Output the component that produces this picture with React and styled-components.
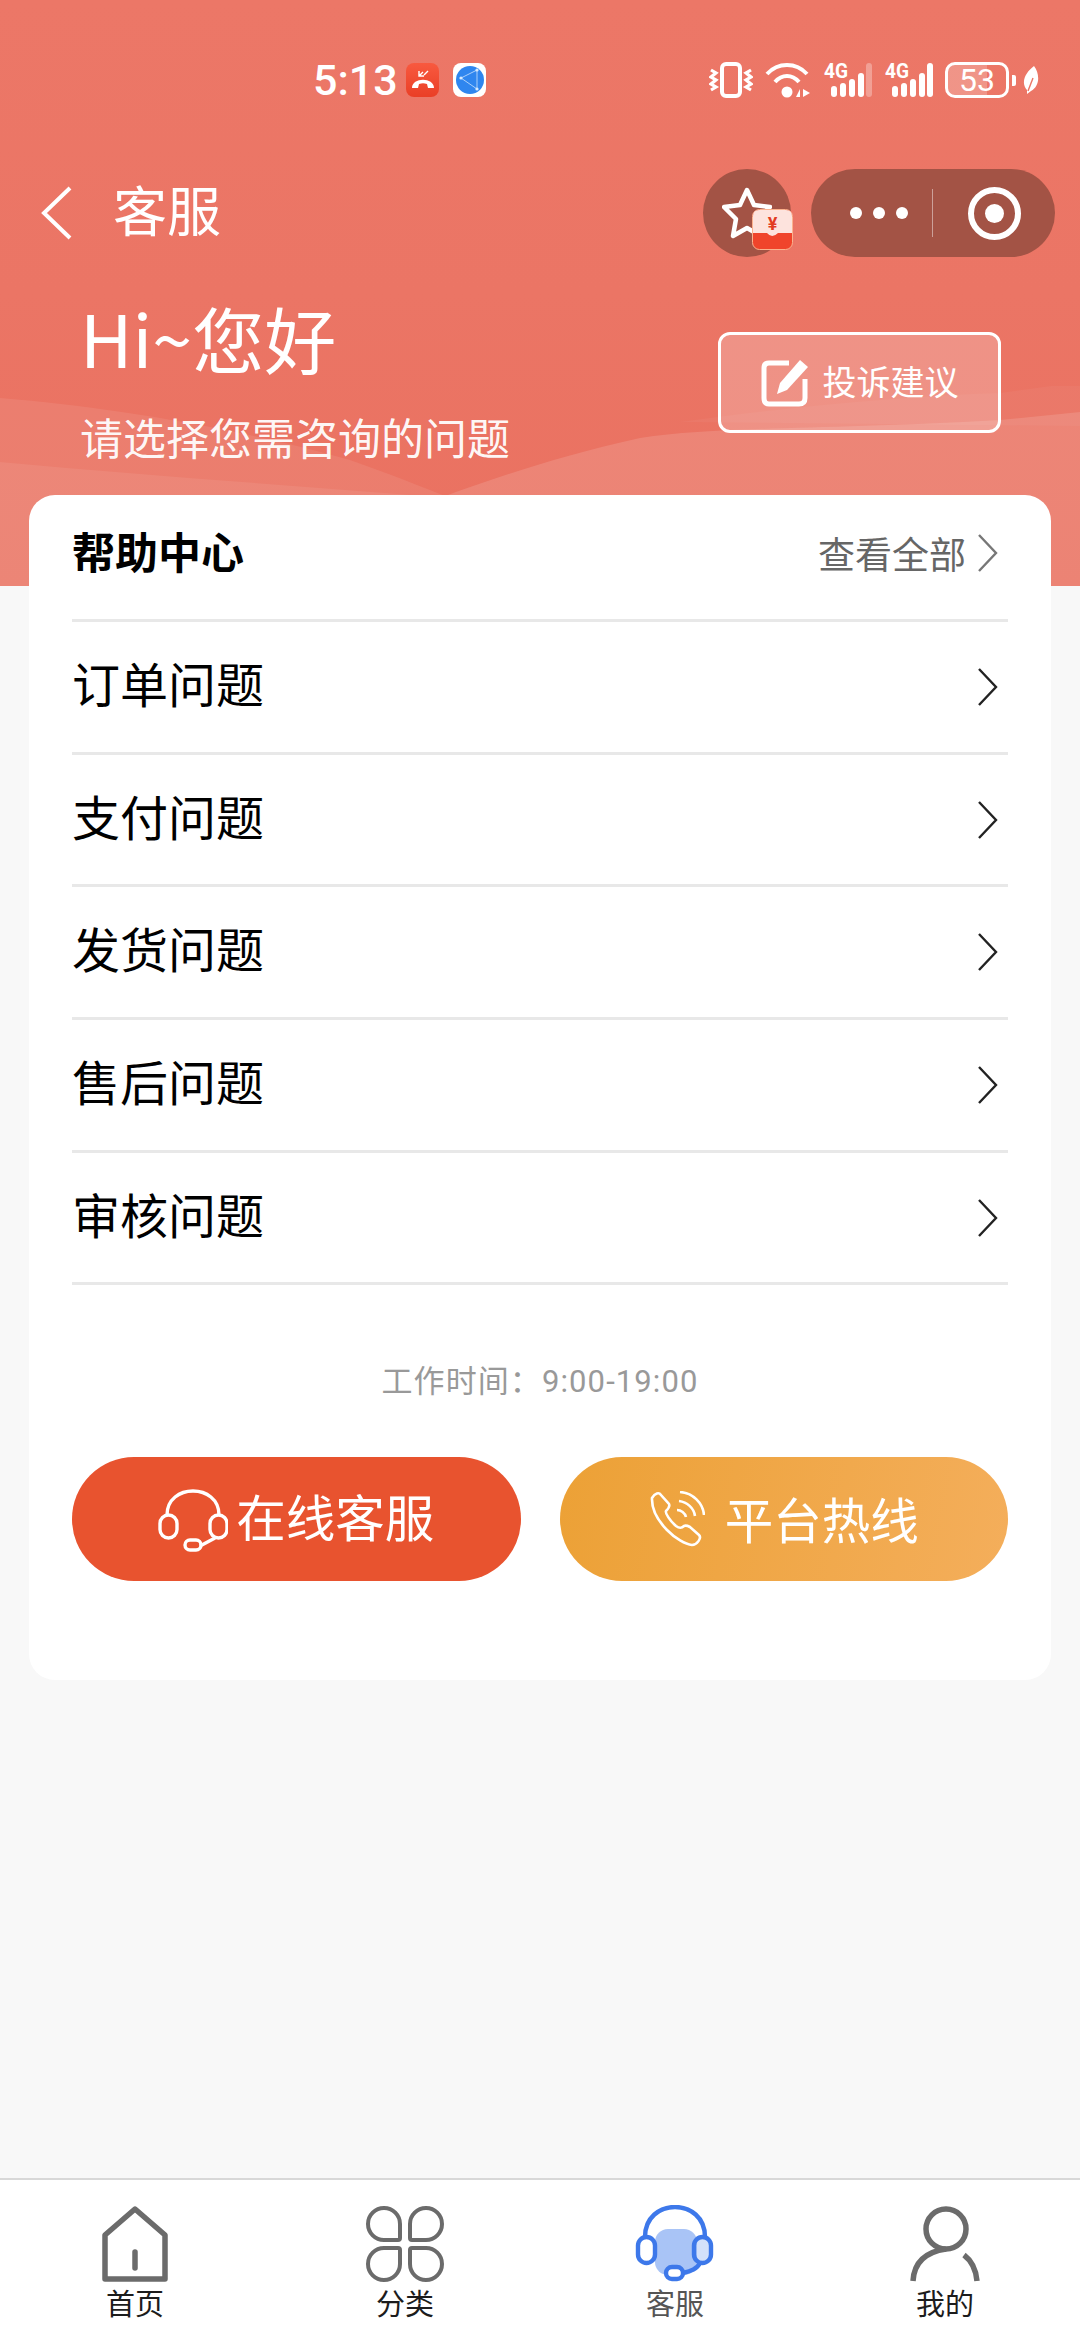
import styled, { createGlobalStyle } from "styled-components";

const GlobalStyle = createGlobalStyle`
  * {
    box-sizing: border-box;
  }
  body {
    margin: 0;
    background: #f8f8f8;
    font-family: "Noto Sans CJK SC", "Noto Sans", sans-serif;
  }
`;

const Page = styled.div`
  width: 1080px;
  min-height: 2340px;
  display: flex;
  flex-direction: column;
  background: #f8f8f8;
`;

const Header = styled.header`
  position: relative;
  height: 586px;
  color: #fff;
  background: linear-gradient(180deg, #ec7767 0%, #eb7565 50%, #ea7160 100%);
  overflow: hidden;
`;

const Waves = styled.svg`
  position: absolute;
  left: 0;
  bottom: 0;
  width: 1080px;
  height: 200px;
`;

const HeaderInner = styled.div`
  position: relative;
`;

const StatusBar = styled.div`
  height: 40px;
  margin-top: 60px;
  padding-left: 313px;
  padding-right: 40px;
  display: flex;
  align-items: center;
`;

const Clock = styled.span`
  font-family: "Roboto", sans-serif;
  font-size: 43px;
  font-weight: 500;
  line-height: 40px;
  width: 93px;
`;

const AppIcon = styled.span`
  width: 33px;
  height: 34px;
  border-radius: 8px;
  margin-right: 14px;
  display: flex;
  align-items: center;
  justify-content: center;
  background: ${({ $bg }) => $bg};
`;

const StatusIcons = styled.div`
  margin-left: auto;
  display: flex;
  align-items: center;
  gap: 12px;
`;

const BatteryWrap = styled.div`
  margin-right: -6px;
  display: flex;
  align-items: center;
  gap: 3px;
`;

const Battery = styled.span`
  width: 64px;
  height: 36px;
  border: 3px solid #fff;
  border-radius: 10px;
  font-family: "Roboto", sans-serif;
  font-size: 32px;
  line-height: 30px;
  text-align: center;
  background: linear-gradient(90deg, rgba(255, 255, 255, 0.22) 68%, transparent 68%);
`;

const BatteryTip = styled.span`
  width: 4px;
  height: 11px;
  background: #fff;
  border-radius: 0 2px 2px 0;
`;

const NavBar = styled.div`
  height: 88px;
  margin-top: 69px;
  padding: 0 25px 0 40px;
  display: flex;
  align-items: center;
`;

const BackArrow = styled.svg`
  width: 32px;
  height: 54px;
`;

const NavTitle = styled.h1`
  margin: 0 0 8px 41px;
  font-size: 54px;
  font-weight: 400;
  line-height: 70px;
`;

const NavActions = styled.div`
  margin-left: auto;
  display: flex;
  gap: 20px;
`;

const FavButton = styled.div`
  position: relative;
  width: 88px;
  height: 88px;
  border-radius: 50%;
  background: #a35345;
  display: flex;
  align-items: center;
  justify-content: center;
`;

const RedPacket = styled.svg`
  position: absolute;
  right: -2px;
  bottom: 7px;
  width: 41px;
  height: 41px;
`;

const Capsule = styled.div`
  width: 244px;
  height: 88px;
  border-radius: 44px;
  background: #a35345;
  display: flex;
  align-items: center;
  padding-left: 39px;
`;

const Dots = styled.div`
  display: flex;
  gap: 11px;
  width: 82px;
`;

const Dot = styled.span`
  width: 12px;
  height: 12px;
  border-radius: 50%;
  background: #fff;
`;

const CapsuleDivider = styled.span`
  width: 1px;
  height: 48px;
  background: rgba(255, 255, 255, 0.45);
`;

const RecordRing = styled.span`
  width: 53px;
  height: 53px;
  margin-left: 35px;
  border: 6px solid #fff;
  border-radius: 50%;
  display: flex;
  align-items: center;
  justify-content: center;
  &::after {
    content: "";
    width: 19px;
    height: 19px;
    border-radius: 50%;
    background: #fff;
  }
`;

const Greeting = styled.div`
  padding: 32px 79px 0 80px;
  display: flex;
  justify-content: space-between;
`;

const GreetingText = styled.div`
  display: flex;
  flex-direction: column;
`;

const Hello = styled.div`
  font-size: 72px;
  line-height: 96px;
`;

const HelloSub = styled.div`
  margin-top: 21px;
  font-size: 43px;
  line-height: 60px;
  color: rgba(255, 255, 255, 0.96);
`;

const Complaint = styled.div`
  width: 283px;
  height: 101px;
  margin-top: 43px;
  border: 3px solid #fff;
  border-radius: 12px;
  background: rgba(255, 255, 255, 0.22);
  display: flex;
  align-items: center;
  justify-content: center;
  gap: 14px;
  font-size: 34px;
`;

const ComplaintLabel = styled.span`
  margin-bottom: 4px;
`;

const Card = styled.section`
  position: relative;
  margin: -91px 29px 0;
  padding: 0 43px 99px;
  background: #fff;
  border-radius: 26px;
`;

const CardHead = styled.div`
  height: 127px;
  display: flex;
  align-items: center;
  justify-content: space-between;
  border-bottom: 3px solid #e8e8e8;
`;

const CardTitle = styled.h2`
  margin: 0 0 14px;
  font-size: 43px;
  font-weight: 700;
  color: #000;
`;

const ViewAll = styled.div`
  display: flex;
  align-items: center;
  gap: 10px;
  margin-bottom: 8px;
  padding-right: 10px;
  font-size: 37px;
  color: #666;
`;

const Chevron = styled.svg`
  width: 22px;
  height: 40px;
  color: ${({ $color }) => $color};
`;

const Row = styled.div`
  height: 132.7px;
  padding-right: 10px;
  display: flex;
  align-items: center;
  justify-content: space-between;
  border-bottom: 3px solid #e8e8e8;
  font-size: 48px;
  color: #000;
`;

const RowLabel = styled.span`
  margin-bottom: 10px;
`;

const WorkHours = styled.div`
  margin-top: 75px;
  font-family: "Roboto", "Noto Sans CJK SC", sans-serif;
  font-size: 31px;
  letter-spacing: 1.1px;
  line-height: 44px;
  text-align: center;
  color: #999;
`;

const Actions = styled.div`
  margin-top: 53px;
  display: flex;
  gap: 39px;
`;

const ActionButton = styled.div`
  flex: 1;
  height: 124px;
  border-radius: 62px;
  background: ${({ $bg }) => $bg};
  color: #fff;
  display: flex;
  align-items: center;
  justify-content: center;
  gap: ${({ $gap }) => $gap}px;
`;

const ActionLabel = styled.span`
  font-size: ${({ $size }) => $size}px;
  margin-bottom: ${({ $lift }) => $lift}px;
`;

const Main = styled.main`
  flex: 1;
`;

const TabBar = styled.nav`
  height: 162px;
  padding-top: 25px;
  display: grid;
  grid-template-columns: repeat(4, 1fr);
  background: #fff;
  border-top: 2px solid #d8d8d8;
`;

const Tab = styled.div`
  display: flex;
  flex-direction: column;
  align-items: center;
`;

const TabIcon = styled.svg`
  width: 80px;
  height: 78px;
  display: block;
`;

const TabLabel = styled.span`
  font-size: 29px;
  line-height: 38px;
  color: ${({ $active }) => ($active ? "#555" : "#1c1c1c")};
`;

const ChevronIcon = ({ color }) => (
  <Chevron $color={color} viewBox="0 0 22 40" fill="none">
    <path d="M3 2 L20 20 L3 38" stroke="currentColor" strokeWidth="2.4" />
  </Chevron>
);

// mobile signal indicator, the tallest bar is dimmed when weak
const SignalIcon = ({ weak }) => (
  <svg width="49" height="44" viewBox="0 -4 49 44">
    <text x="1" y="16" fontFamily="Roboto, sans-serif" fontSize="21" fontWeight="700" fill="#fff" textLength="24" lengthAdjust="spacingAndGlyphs">4G</text>
    <rect x="8" y="24" width="6" height="11" rx="3" fill="#fff" />
    <rect x="17" y="21" width="6" height="14" rx="3" fill="#fff" />
    <rect x="26" y="17" width="6" height="18" rx="3" fill="#fff" />
    <rect x="35" y="11" width="6" height="24" rx="3" fill="#fff" />
    <rect x="43" y="1" width="6" height="34" rx="3" fill="#fff" opacity={weak ? 0.3 : 1} />
  </svg>
);

const VibrateIcon = () => (
  <svg width="44" height="36" viewBox="0 0 44 36" fill="none" stroke="#fff" strokeWidth="4">
    <rect x="13" y="2" width="18" height="32" rx="4" />
    <path d="M2 8 l5 3 -5 4 5 3 -5 4 5 3 -5 3" strokeWidth="3.2" />
    <path d="M42 8 l-5 3 5 4 -5 3 5 4 -5 3 5 3" strokeWidth="3.2" />
  </svg>
);

const WifiIcon = () => (
  <svg width="46" height="36" viewBox="0 0 46 36" fill="none" stroke="#fff" strokeWidth="4">
    <path d="M2 12 C13 0 31 0 42 12" />
    <path d="M10 20 C17 12 27 12 34 20" />
    <circle cx="22" cy="30" r="5.5" fill="#fff" stroke="none" />
    <path d="M35 35 V27 L31 35 Z M38 35 V27 L45 31 Z" fill="#fff" stroke="none" />
  </svg>
);

const LeafIcon = () => (
  <svg width="18" height="28" viewBox="0 0 18 28">
    <path d="M12 0 C18 8 18 20 9 25 L5 28 L5 24 C-2 16 4 6 12 0 Z" fill="#fff" />
    <path d="M6 25 L11 12" stroke="#eb7565" strokeWidth="1.4" />
  </svg>
);

const HeadsetIcon = ({ color, width, height }) => (
  <svg width={width} height={height} viewBox="0 0 70 66" fill="none" stroke={color} strokeWidth="3.4">
    <path d="M9 29 C9 -3 61 -3 61 29" />
    <rect x="2" y="29" width="17" height="23" rx="8.5" />
    <rect x="52" y="29" width="17" height="23" rx="8.5" />
    <path d="M57 52 L42 60" />
    <rect x="27" y="54" width="16" height="10" rx="5" />
  </svg>
);

const App = () => {
  const rows = ["订单问题", "支付问题", "发货问题", "售后问题", "审核问题"];

  return (
    <Page>
      <GlobalStyle />
      <Header>
        <Waves viewBox="0 0 1080 200" preserveAspectRatio="none">
          <path d="M0 12 C100 20 230 40 350 74 C390 88 420 100 450 112 L450 200 L0 200 Z" fill="#fff" opacity="0.08" />
          <path d="M0 76 C150 90 300 100 450 112 L450 200 L0 200 Z" fill="#fff" opacity="0.07" />
          <path d="M440 112 C500 90 560 70 640 52 C720 40 820 44 1000 34 L1080 26 L1080 200 L440 200 Z" fill="#fff" opacity="0.13" />
          <path d="M680 36 C780 22 900 10 1000 7 L1080 -4 L1080 40 Z" fill="#fff" opacity="0.04" />
        </Waves>
        <HeaderInner>
          <StatusBar>
            <Clock>5:13</Clock>
            <AppIcon $bg="linear-gradient(180deg, #f8593f, #ea3f26)">
              <svg width="24" height="22" viewBox="0 0 24 22" fill="none">
                <path d="M1 19 C1 8 23 8 23 19 L17 19 L16 15 C13 14 11 14 8 15 L7 19 Z" fill="#fff" />
                <path d="M8 2 V7 H13 M8 7 L12 3 M13 6 L17 2" stroke="#fff" strokeWidth="1.4" />
              </svg>
            </AppIcon>
            <AppIcon $bg="#fff">
              <svg width="28" height="28" viewBox="0 0 28 28">
                <circle cx="14" cy="14" r="14" fill="#2f86ef" />
                <path d="M21 4 L5 12 L21 23 Z" fill="none" stroke="#b9d8fa" strokeWidth="0.9" />
                <circle cx="21" cy="4" r="1.6" fill="#d6e9fd" />
                <circle cx="5" cy="12" r="1.6" fill="#d6e9fd" />
                <circle cx="21" cy="23" r="1.6" fill="#d6e9fd" />
              </svg>
            </AppIcon>
            <StatusIcons>
              <VibrateIcon />
              <WifiIcon />
              <SignalIcon weak />
              <SignalIcon />
              <BatteryWrap>
                <Battery>53</Battery>
                <BatteryTip />
              </BatteryWrap>
              <LeafIcon />
            </StatusIcons>
          </StatusBar>
          <NavBar>
            <BackArrow viewBox="0 0 32 54" fill="none">
              <path d="M30 2 L4 27 L30 52" stroke="#fff" strokeWidth="4" />
            </BackArrow>
            <NavTitle>客服</NavTitle>
            <NavActions>
              <FavButton>
                <svg width="50" height="52" viewBox="0 0 50 52" fill="none">
                  <path d="M25 3 L32 18 L48 20 L36 32 L39 49 L25 41 L11 49 L14 32 L2 20 L18 18 Z" stroke="#fff" strokeWidth="4.5" strokeLinejoin="round" />
                </svg>
                <RedPacket viewBox="0 0 41 41">
                  <rect x="0.5" y="0.5" width="40" height="40" rx="7" fill="#f0442b" stroke="#fbb28e" />
                  <path d="M1 7 Q1 1 7 1 H34 Q40 1 40 7 V24 H26 Q20 30 15 24 H1 Z" fill="#fde3dd" />
                  <text x="20.5" y="21" textAnchor="middle" fontSize="18" fontWeight="700" fontFamily="Roboto, sans-serif" fill="#e23b22">¥</text>
                </RedPacket>
              </FavButton>
              <Capsule>
                <Dots>
                  <Dot />
                  <Dot />
                  <Dot />
                </Dots>
                <CapsuleDivider />
                <RecordRing />
              </Capsule>
            </NavActions>
          </NavBar>
          <Greeting>
            <GreetingText>
              <Hello>Hi~您好</Hello>
              <HelloSub>请选择您需咨询的问题</HelloSub>
            </GreetingText>
            <Complaint>
              <svg width="48" height="48" viewBox="0 0 48 48" fill="none">
                <path d="M28 4 H8 Q3 4 3 9 V39 Q3 45 8 45 H38 Q44 45 44 39 V20" stroke="#fff" strokeWidth="5" />
                <path d="M39 1 L47 8 L26 31 L16 35 L19 24 Z" fill="#fff" />
              </svg>
              <ComplaintLabel>投诉建议</ComplaintLabel>
            </Complaint>
          </Greeting>
        </HeaderInner>
      </Header>

      <Main>
        <Card>
          <CardHead>
            <CardTitle>帮助中心</CardTitle>
            <ViewAll>
              查看全部
              <ChevronIcon color="#777" />
            </ViewAll>
          </CardHead>
          {rows.map((label) => (
            <Row key={label}>
              <RowLabel>{label}</RowLabel>
              <ChevronIcon color="#222" />
            </Row>
          ))}
          <WorkHours>工作时间：9:00-19:00</WorkHours>
          <Actions>
            <ActionButton $bg="#e8532f" $gap={8}>
              <HeadsetIcon color="#fff" width={70} height={66} />
              <ActionLabel $size={49.5} $lift={8}>在线客服</ActionLabel>
            </ActionButton>
            <ActionButton $bg="linear-gradient(100deg, #eca136, #f4ae5b)" $gap={20}>
              <svg width="56" height="56" viewBox="0 0 56 56" fill="none" stroke="#fff" strokeWidth="2.6">
                <path d="M3 7 C6 2 10 1 12 4 L20 13 C21 15 19 18 17 20 C16 22 21 30 27 35 C31 38 33 37 35 35 C37 34 39 35 41 36 L50 44 C53 47 48 54 43 54 C30 53 2 30 3 7 Z" />
                <path d="M31 1 C44 2 54 12 55 24" />
                <path d="M30 10 C38 11 45 17 46 25" />
                <path d="M28 19 C32 19 36 22 37 26" />
              </svg>
              <ActionLabel $size={48.5} $lift={2}>平台热线</ActionLabel>
            </ActionButton>
          </Actions>
        </Card>
      </Main>

      <TabBar>
        <Tab>
          <TabIcon viewBox="0 0 80 78" fill="none" stroke="#6b6b6b" strokeWidth="5.5" strokeLinejoin="round">
            <path d="M40 4 L70 30 V74 H10 V30 Z" />
            <path d="M40 47 V63" strokeLinecap="round" />
          </TabIcon>
          <TabLabel>首页</TabLabel>
        </Tab>
        <Tab>
          <TabIcon viewBox="0 0 80 78" fill="none" stroke="#6b6b6b" strokeWidth="4">
            <path d="M33 35 H19 A16 16 0 1 1 35 19 V33 Q35 35 33 35 Z" />
            <path d="M47 35 Q45 35 45 33 V19 A16 16 0 1 1 61 35 Z" />
            <path d="M35 45 V59 A16 16 0 1 1 19 43 H33 Q35 43 35 45 Z" />
            <path d="M45 45 Q45 43 47 43 H61 A16 16 0 1 1 45 59 Z" />
          </TabIcon>
          <TabLabel>分类</TabLabel>
        </Tab>
        <Tab>
          <TabIcon viewBox="0 0 80 78" fill="none" stroke="#3d78ea" strokeWidth="4.4">
            <rect x="20" y="24" width="42" height="46" rx="13" fill="#a9c4f6" stroke="none" />
            <path d="M10 32 C10 -8 70 -8 70 32" />
            <rect x="3" y="32" width="17" height="26" rx="8.5" fill="#fff" />
            <rect x="59" y="32" width="17" height="26" rx="8.5" fill="#a9c4f6" fillOpacity="0.5" />
            <path d="M65 58 C62 64 56 66 48 68" />
            <rect x="31" y="62" width="17" height="12" rx="6" fill="#fff" />
          </TabIcon>
          <TabLabel $active>客服</TabLabel>
        </Tab>
        <Tab>
          <TabIcon viewBox="0 0 80 78" fill="none" stroke="#6b6b6b" strokeWidth="5.5">
            <circle cx="41" cy="24" r="20" />
            <path d="M8 76 C9 58 20 47 41 44" />
            <path d="M59 50 C67 56 71 65 72 76" />
          </TabIcon>
          <TabLabel>我的</TabLabel>
        </Tab>
      </TabBar>
    </Page>
  );
};

export default App;
